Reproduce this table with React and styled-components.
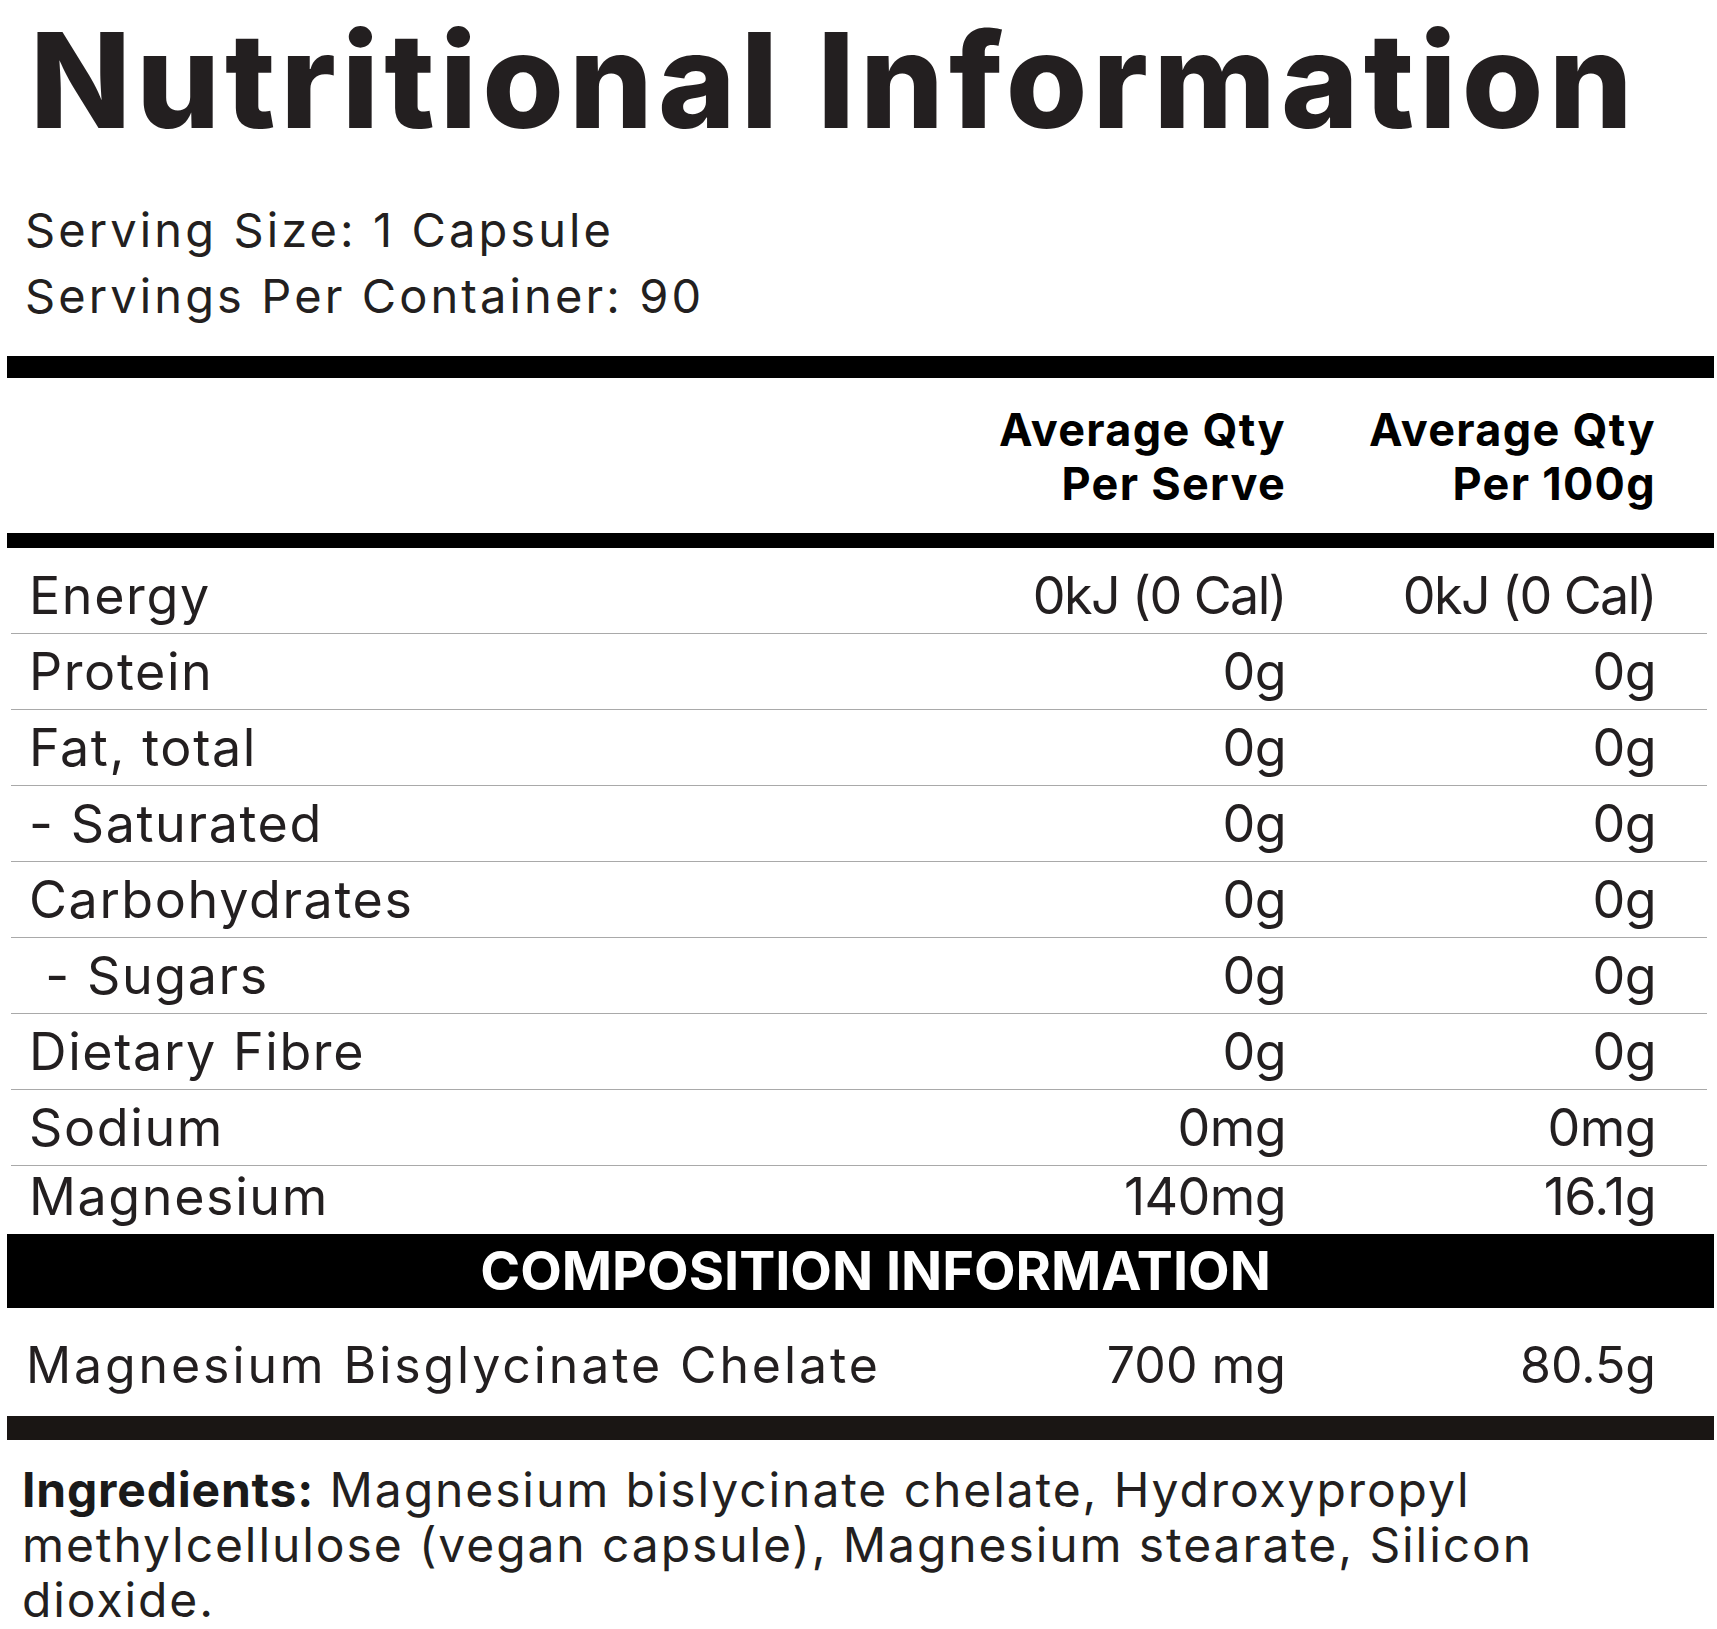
import React from 'react'
import styled, { createGlobalStyle } from 'styled-components'

const GlobalStyle = createGlobalStyle`
  html, body {
    margin: 0;
    padding: 0;
    background: #ffffff;
  }
  body {
    font-family: 'Inter', 'Liberation Sans', sans-serif;
    color: #231f20;
  }
`

const Page = styled.div`
  width: 1717px;
  padding-top: 14px;
  box-sizing: border-box;
`

const Title = styled.h1`
  margin: 0 0 0 30px;
  font-size: 132px;
  line-height: 132px;
  font-weight: 800;
  letter-spacing: 5.1px;
  color: #231f20;
  white-space: nowrap;
`

const Serving = styled.div`
  margin: 51px 0 0 25px;
  font-size: 47px;
  line-height: 66px;
  font-weight: 400;
  letter-spacing: 3.1px;
`

const Bar = styled.div`
  margin: ${(p) => p.$mt || 0}px 3px 0 7px;
  height: ${(p) => p.$h}px;
  background: ${(p) => p.$color || '#000'};
`

const Table = styled.div`
  margin: 0 10px 0 11px;
`

const Grid = styled.div`
  display: grid;
  grid-template-columns: 1fr 300px 370px;
  padding: 0 51px 0 18px;
`

const Head = styled(Grid)`
  padding-top: 25px;
  padding-bottom: 22px;
  font-size: 45px;
  line-height: 54px;
  font-weight: 700;
  letter-spacing: 1.3px;
  color: #000;
`

const Right = styled.div`
  text-align: right;
  white-space: nowrap;
`

const Value = styled(Right)`
  letter-spacing: ${(p) => (p.$tight ? -1.6 : -0.6)}px;
`

const Label = styled.div`
  letter-spacing: ${(p) => p.$spacing ?? 1.6}px;
  white-space: pre;
`

const Row = styled(Grid)`
  font-size: 52px;
  line-height: ${(p) => (p.$last ? 62 : 75)}px;
  padding-top: ${(p) => (p.$first ? 10 : 0)}px;
  padding-bottom: ${(p) => (p.$last ? 6 : 0)}px;
  border-bottom: ${(p) => (p.$last ? 'none' : '1px solid #a9a9a9')};
`

const Composition = styled.div`
  margin: 0 3px 0 7px;
  padding-left: 30px;
  background: #000;
  color: #fff;
  text-align: center;
  font-size: 54px;
  line-height: 74px;
  font-weight: 700;
`

const CompRow = styled(Grid)`
  margin: 0 10px 0 11px;
  padding-top: 6px;
  padding-left: 15px;
  padding-right: 51px;
  font-size: 50px;
  line-height: 102px;
  grid-template-columns: 1fr 305px 370px;
`

const Ingredients = styled.p`
  margin: 22px 40px 0 22px;
  font-size: 48px;
  line-height: 55px;
  letter-spacing: 1.9px;
  b {
    font-weight: 700;
    letter-spacing: 0.8px;
    color: #1a1a1a;
  }
`

const rows = [
  ['Energy', '0kJ (0 Cal)', '0kJ (0 Cal)'],
  ['Protein', '0g', '0g'],
  ['Fat, total', '0g', '0g'],
  ['- Saturated', '0g', '0g'],
  ['Carbohydrates', '0g', '0g'],
  [' - Sugars', '0g', '0g'],
  ['Dietary Fibre', '0g', '0g'],
  ['Sodium', '0mg', '0mg'],
  ['Magnesium', '140mg', '16.1g'],
]

export default function App() {
  return (
    <Page>
      <GlobalStyle />
      <Title>Nutritional Information</Title>
      <Serving>
        Serving Size: 1 Capsule
        <br />
        Servings Per Container: 90
      </Serving>
      <Bar $mt={27} $h={22} />
      <Table>
        <Head>
          <div />
          <Right>
            Average Qty
            <br />
            Per Serve
          </Right>
          <Right>
            Average Qty
            <br />
            Per 100g
          </Right>
        </Head>
      </Table>
      <Bar $h={15} />
      <Table>
        {rows.map(([label, serve, per100], i) => (
          <Row key={label} $first={i === 0} $last={i === rows.length - 1}>
            <Label>{label}</Label>
            <Value $tight={i === 0}>{serve}</Value>
            <Value $tight={i === 0}>{per100}</Value>
          </Row>
        ))}
      </Table>
      <Composition>COMPOSITION INFORMATION</Composition>
      <CompRow>
        <Label $spacing={2.9}>Magnesium Bisglycinate Chelate</Label>
        <Right>700 mg</Right>
        <Right>80.5g</Right>
      </CompRow>
      <Bar $h={24} $color="#1a1614" />
      <Ingredients>
        <b>Ingredients:</b> Magnesium bislycinate chelate, Hydroxypropyl methylcellulose (vegan capsule), Magnesium stearate, Silicon dioxide.
      </Ingredients>
    </Page>
  )
}
